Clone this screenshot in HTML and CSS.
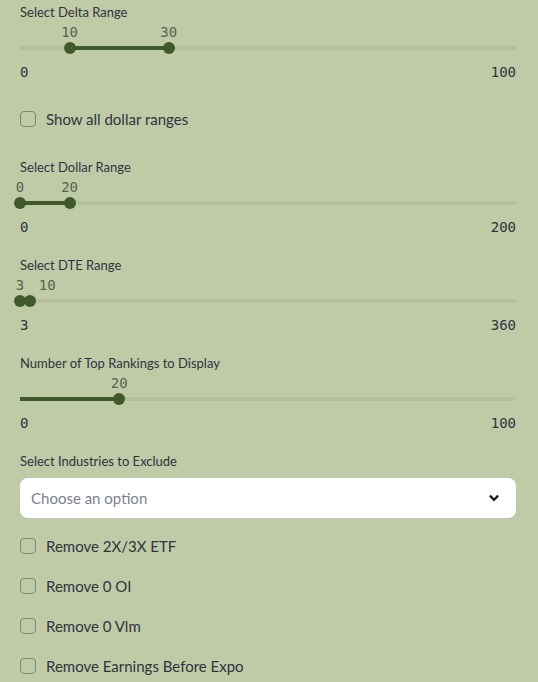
FILE: index.html
```html
<!DOCTYPE html>
<html lang="en">
<head>
  <meta charset="UTF-8">
  <title>Filters</title>
  <link rel="stylesheet" href="styles.css">
</head>
<body>
  <div class="sidebar">
    <div class="slider delta">
      <div class="label">Select Delta Range</div>
      <div class="values">
        <span style="left: 10%">10</span>
        <span style="left: 30%">30</span>
      </div>
      <div class="track">
        <div class="fill" style="left: 10%; width: 20%"></div>
        <div class="thumb" style="left: 10%"></div>
        <div class="thumb" style="left: 30%"></div>
      </div>
      <div class="minmax"><span>0</span><span>100</span></div>
    </div>

    <label class="check first"><span class="box"></span>Show all dollar ranges</label>

    <div class="slider">
      <div class="label">Select Dollar Range</div>
      <div class="values">
        <span style="left: 0%">0</span>
        <span style="left: 10%">20</span>
      </div>
      <div class="track">
        <div class="fill" style="left: 0%; width: 10%"></div>
        <div class="thumb" style="left: 0%"></div>
        <div class="thumb" style="left: 10%"></div>
      </div>
      <div class="minmax"><span>0</span><span>200</span></div>
    </div>

    <div class="slider">
      <div class="label">Select DTE Range</div>
      <div class="values">
        <span style="left: 0%">3</span>
        <span style="left: 5.5%">10</span>
      </div>
      <div class="track">
        <div class="fill" style="left: 0%; width: 1.96%"></div>
        <div class="thumb" style="left: 0%"></div>
        <div class="thumb" style="left: 1.96%"></div>
      </div>
      <div class="minmax"><span>3</span><span>360</span></div>
    </div>

    <div class="slider">
      <div class="label">Number of Top Rankings to Display</div>
      <div class="values">
        <span style="left: 20%">20</span>
      </div>
      <div class="track">
        <div class="fill" style="left: 0%; width: 20%"></div>
        <div class="thumb" style="left: 20%"></div>
      </div>
      <div class="minmax"><span>0</span><span>100</span></div>
    </div>

    <div class="select-block">
      <div class="label">Select Industries to Exclude</div>
      <div class="select">
        <span>Choose an option</span>
        <svg width="14" height="14" viewBox="0 0 24 24"><path d="M5 8l7 7 7-7" fill="none" stroke="#1b1b1b" stroke-width="4"/></svg>
      </div>
    </div>

    <label class="check"><span class="box"></span>Remove 2X/3X ETF</label>
    <label class="check"><span class="box"></span>Remove 0 OI</label>
    <label class="check"><span class="box"></span>Remove 0 Vlm</label>
    <label class="check"><span class="box"></span>Remove Earnings Before Expo</label>
  </div>
</body>
</html>
```

FILE: styles.css
```css
body {
  margin: 0;
  background-color: #bfcaa7;
  font-family: Lato, "Liberation Sans", sans-serif;
  color: #31333f;
}
.sidebar {
  padding: 2px 22px 0 20px;
  display: flex;
  flex-direction: column;
}
.label {
  font-size: 13px;
  line-height: 20px;
  height: 20px;
}
.slider {
  margin-bottom: 20px;
}
.slider.delta {
  margin-bottom: 27px;
}
.values {
  position: relative;
  height: 16px;
  margin-top: 2px;
  font-family: "DejaVu Sans Mono", monospace;
  font-size: 14px;
  line-height: 16px;
  color: #5a6350;
}
.values span {
  position: absolute;
  top: 0;
  transform: translateX(-50%);
}
.track {
  position: relative;
  height: 4px;
  margin-top: 6px;
  background-color: #b4bf9b;
  border-radius: 2px;
}
.fill {
  position: absolute;
  top: 0;
  height: 4px;
  background-color: #3f5a28;
}
.thumb {
  position: absolute;
  top: -4px;
  width: 12px;
  height: 12px;
  margin-left: -6px;
  border-radius: 50%;
  background-color: #3f5a28;
}
.minmax {
  display: flex;
  justify-content: space-between;
  margin-top: 14px;
  font-family: "DejaVu Sans Mono", monospace;
  font-size: 14px;
  line-height: 16px;
  color: #31333f;
}
.check {
  display: flex;
  align-items: center;
  height: 24px;
  font-size: 15px;
  margin-bottom: 16px;
}
.check.first {
  margin-bottom: 26px;
}
.box {
  width: 14px;
  height: 14px;
  border: 1px solid #7f8672;
  border-radius: 4px;
  margin-right: 10px;
}
.select-block {
  margin-bottom: 16px;
}
.select {
  margin-top: 7px;
  height: 40px;
  background-color: #fff;
  border-radius: 8px;
  display: flex;
  align-items: center;
  justify-content: space-between;
  padding: 0 15px 0 11px;
  font-size: 15px;
  color: #7d7f8c;
}
```
